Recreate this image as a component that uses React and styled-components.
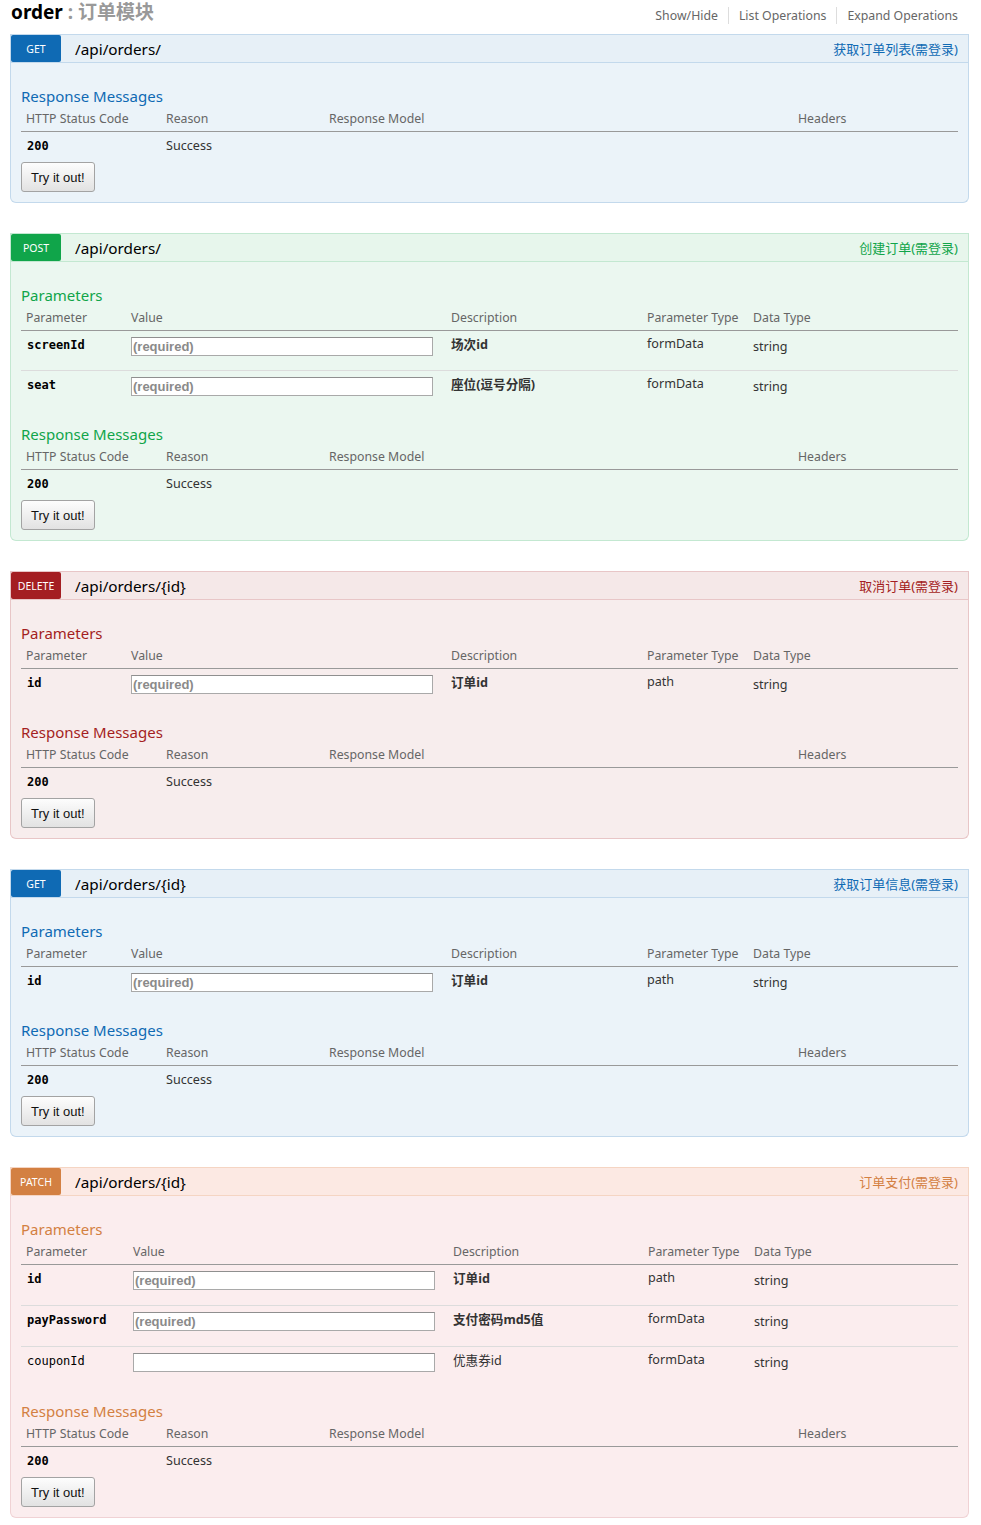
import styled, { createGlobalStyle } from 'styled-components';

const GlobalStyle = createGlobalStyle`
    body {
        margin: 0;
        background: #fff;
        font-family: "Noto Sans", "Noto Sans CJK SC", sans-serif;
        color: #333;
    }
`;

const methods = {
    get: { label: 'GET', main: '#0f6ab4', head: '#e7f0f7', body: '#ebf3f9', border: '#c3d9ec', bodyBorder: '#c3d9ec' },
    post: { label: 'POST', main: '#10a54a', head: '#e7f6ec', body: '#ebf7f0', border: '#c3e8d1', bodyBorder: '#c3e8d1' },
    delete: { label: 'DELETE', main: '#a41e22', head: '#f5e8e8', body: '#f7eded', border: '#e8c6c7', bodyBorder: '#e8c6c7' },
    patch: { label: 'PATCH', main: '#d38042', head: '#fce9e3', body: '#fbedee', border: '#f5d5c3', bodyBorder: '#f0d2d4' },
};

const Page = styled.div`
    padding: 0 12px 8px 10px;
`;

const Header = styled.div`
    display: flex;
    justify-content: space-between;
    align-items: flex-start;
    height: 34px;
    padding-right: 11px;
`;

const Title = styled.h2`
    margin: 0 0 0 1px;
    font-size: 19px;
    line-height: 24px;
    font-weight: bold;
    color: #000;
`;

const TitleNote = styled.span`
    color: #999;
`;

const Options = styled.ul`
    display: flex;
    list-style: none;
    margin: 0;
    padding: 7px 0 0;
`;

const Option = styled.li`
    font-size: 12.3px;
    line-height: 17px;
    color: #666;
    padding: 0 10px;
    border-left: 1px solid #ddd;

    &:first-child {
        border-left: none;
    }

    &:last-child {
        padding-right: 0;
    }
`;

const OperationList = styled.div`
    display: flex;
    flex-direction: column;
    gap: 30px;
`;

const Heading = styled.div`
    display: flex;
    align-items: center;
    box-sizing: border-box;
    height: 29px;
    background: ${p => methods[p.$m].head};
    border: 1px solid ${p => methods[p.$m].border};
`;

const Badge = styled.span`
    display: flex;
    align-items: center;
    justify-content: center;
    width: 50px;
    height: 27px;
    border-radius: 2px;
    background: ${p => methods[p.$m].main};
    color: #fff;
    font-size: 10.5px;
    text-transform: uppercase;
`;

const Path = styled.span`
    margin-left: 14px;
    font-size: 15.3px;
    color: #000;
`;

const Summary = styled.span`
    margin-left: auto;
    padding-right: 10px;
    font-size: 13px;
    color: ${p => methods[p.$m].main};
`;

const Content = styled.div`
    background: ${p => methods[p.$m].body};
    border: 1px solid ${p => methods[p.$m].bodyBorder};
    border-top: none;
    border-radius: 0 0 6px 6px;
    padding: 9px 10px 10px;
`;

const SectionTitle = styled.h4`
    margin: 0;
    padding: 14px 0 2px;
    font-size: 15px;
    line-height: 20px;
    font-weight: normal;
    color: ${p => methods[p.$m].main};
`;

const Table = styled.table`
    width: 100%;
    border-collapse: collapse;
    table-layout: fixed;
`;

const Th = styled.th`
    box-sizing: border-box;
    width: ${p => p.$w || 'auto'};
    text-align: left;
    font-weight: normal;
    font-size: 12.3px;
    line-height: 16px;
    color: #666;
    padding: 3px 5px 4px;
    border-bottom: 1px solid #999;
    white-space: nowrap;
`;

const ParamRow = styled.tr`
    & + & td {
        border-top: 1px solid #dcdcdc;
    }

    & td {
        padding-bottom: ${p => (p.$wide ? '15px' : '14px')};
    }
`;

const ParamCell = styled.td`
    vertical-align: top;
    padding: ${p => (p.$low ? '8px' : '6px')} 5px 14px;
    font-size: 12.6px;
    line-height: ${p => (p.$tall ? '16px' : '14px')};
    font-weight: ${p => (p.$bold ? 'bold' : 'normal')};
    color: #333;
`;

const CodeCell = styled.td`
    vertical-align: top;
    padding: 6px 5px 14px 6px;
    font-family: "DejaVu Sans Mono", monospace;
    font-size: 12px;
    line-height: 16px;
    font-weight: ${p => (p.$bold ? 'bold' : 'normal')};
    color: #000;
`;

const ValueInput = styled.input`
    display: block;
    box-sizing: border-box;
    width: 302px;
    height: 19px;
    margin: 0;
    padding: 0 1px;
    background: #fff;
    border: 1px solid #a9a9a9;
    border-top-color: #8f8f8f;
    font-family: "Liberation Sans", Arial, sans-serif;
    font-size: 13px;
    font-weight: bold;

    &::placeholder {
        color: #8a8a8a;
    }
`;

const ResponseCell = styled.td`
    vertical-align: top;
    padding: 6px 5px 0;
    font-size: 12.6px;
    line-height: 16px;
    color: #333;
`;

const StatusCell = styled(ResponseCell)`
    padding-left: 6px;
    font-family: "DejaVu Sans Mono", monospace;
    font-size: 12px;
    font-weight: bold;
    color: #000;
`;

const TryButton = styled.button`
    display: block;
    margin-top: 8px;
    height: 30px;
    padding: 0 9px;
    background: linear-gradient(#fdfdfd, #e2e2e2);
    border: 1px solid #a3a3a3;
    border-radius: 3px;
    font-family: "Liberation Sans", Arial, sans-serif;
    font-size: 13px;
    color: #111;
`;

const operations = [
    { method: 'get', path: '/api/orders/', summary: '获取订单列表(需登录)', params: [] },
    {
        method: 'post', path: '/api/orders/', summary: '创建订单(需登录)',
        params: [
            { name: 'screenId', required: true, desc: '场次id', type: 'formData' },
            { name: 'seat', required: true, desc: '座位(逗号分隔)', type: 'formData' },
        ],
    },
    {
        method: 'delete', path: '/api/orders/{id}', summary: '取消订单(需登录)',
        params: [{ name: 'id', required: true, desc: '订单id', type: 'path' }],
    },
    {
        method: 'get', path: '/api/orders/{id}', summary: '获取订单信息(需登录)',
        params: [{ name: 'id', required: true, desc: '订单id', type: 'path' }],
    },
    {
        method: 'patch', path: '/api/orders/{id}', summary: '订单支付(需登录)', wide: true,
        params: [
            { name: 'id', required: true, desc: '订单id', type: 'path' },
            { name: 'payPassword', required: true, desc: '支付密码md5值', type: 'formData' },
            { name: 'couponId', required: false, desc: '优惠券id', type: 'formData' },
        ],
    },
];

const ParamTable = ({ params, wide }) => (
    <Table>
        <thead>
            <tr>
                <Th $w={wide ? '107px' : '105px'}>Parameter</Th>
                <Th $w="320px">Value</Th>
                <Th $w={wide ? '195px' : '196px'}>Description</Th>
                <Th $w="106px">Parameter Type</Th>
                <Th>Data Type</Th>
            </tr>
        </thead>
        <tbody>
            {params.map(p => (
                <ParamRow key={p.name} $wide={wide}>
                    <CodeCell $bold={p.required}>{p.name}</CodeCell>
                    <ParamCell>
                        <ValueInput placeholder={p.required ? '(required)' : ''}/>
                    </ParamCell>
                    <ParamCell $tall $bold={p.required}>{p.desc}</ParamCell>
                    <ParamCell>{p.type}</ParamCell>
                    <ParamCell $tall $low>string</ParamCell>
                </ParamRow>
            ))}
        </tbody>
    </Table>
);

const ResponseTable = () => (
    <Table>
        <thead>
            <tr>
                <Th $w="140px">HTTP Status Code</Th>
                <Th $w="163px">Reason</Th>
                <Th $w="469px">Response Model</Th>
                <Th>Headers</Th>
            </tr>
        </thead>
        <tbody>
            <tr>
                <StatusCell>200</StatusCell>
                <ResponseCell>Success</ResponseCell>
                <ResponseCell/>
                <ResponseCell/>
            </tr>
        </tbody>
    </Table>
);

const Operation = ({ op }) => (
    <div>
        <Heading $m={op.method}>
            <Badge $m={op.method}>{methods[op.method].label}</Badge>
            <Path>{op.path}</Path>
            <Summary $m={op.method}>{op.summary}</Summary>
        </Heading>
        <Content $m={op.method}>
            {op.params.length > 0 && (
                <>
                    <SectionTitle $m={op.method}>Parameters</SectionTitle>
                    <ParamTable params={op.params} wide={op.wide}/>
                </>
            )}
            <SectionTitle $m={op.method}>Response Messages</SectionTitle>
            <ResponseTable/>
            <TryButton type="button">Try it out!</TryButton>
        </Content>
    </div>
);

const App = () => (
    <>
        <GlobalStyle/>
        <Page>
            <Header>
                <Title>order <TitleNote>: 订单模块</TitleNote></Title>
                <Options>
                    <Option>Show/Hide</Option>
                    <Option>List Operations</Option>
                    <Option>Expand Operations</Option>
                </Options>
            </Header>
            <OperationList>
                {operations.map((op, i) => <Operation key={i} op={op}/>)}
            </OperationList>
        </Page>
    </>
);

export default App;
